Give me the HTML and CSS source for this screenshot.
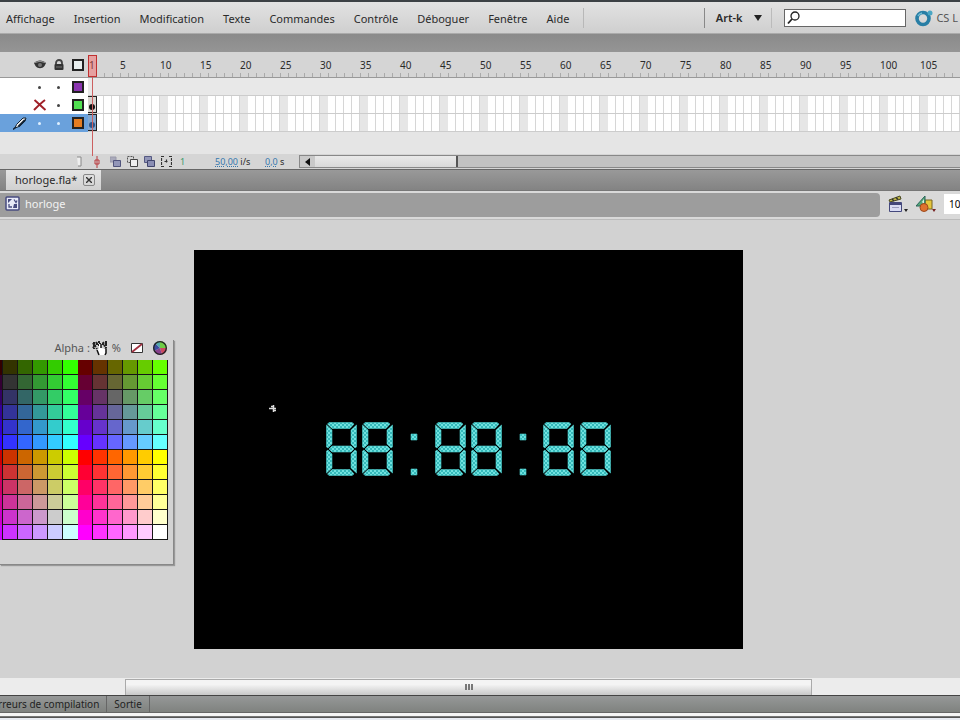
FILE: index.html
```html
<!DOCTYPE html>
<html lang="fr">
<head>
  <meta charset="UTF-8" />
  <meta name="viewport" content="width=device-width, initial-scale=1" />
  <title>horloge.fla</title>
  <link rel="stylesheet" href="styles.css">
</head>
<body>
  <header class="menubar">
    <nav class="menus">
      <button type="button">Affichage</button>
      <button type="button">Insertion</button>
      <button type="button">Modification</button>
      <button type="button">Texte</button>
      <button type="button">Commandes</button>
      <button type="button">Contrôle</button>
      <button type="button">Déboguer</button>
      <button type="button">Fenêtre</button>
      <button type="button">Aide</button>
    </nav>
    <div class="outils">
      <button type="button" class="espace">Art-k
        <svg width="8" height="6" viewBox="0 0 8 6"><path d="M0 0h8L4 6z" fill="#222"/></svg>
      </button>
      <label class="recherche">
        <svg width="14" height="14" viewBox="0 0 14 14" fill="none" stroke="#222"><circle cx="8" cy="5" r="4" stroke-width="1.3"/><path d="M5 8L1 12.500" stroke-width="1.8"/></svg>
        <input type="text" aria-label="Rechercher" />
      </label>
      <a href="#" class="cslive">
        <svg width="20" height="18" viewBox="0 0 20 18"><circle cx="9" cy="9.500" r="6" fill="none" stroke="#287ea5" stroke-width="3.600"/><path d="M4 7a6 6 0 0 1 4-3" fill="none" stroke="#70bcd4" stroke-width="1.500"/><circle cx="16" cy="4" r="2.500" fill="#4aa6c4"/></svg>
        CS L
      </a>
    </div>
  </header>
  <div class="bande"></div>

  <section class="timeline">
    <div class="ligne regle">
      <div class="calque">
        <span></span>
        <svg width="12" height="10" viewBox="0 0 12 10"><path d="M0 3C3-.5 9-.5 12 3L10.500 6C8 9 4 9 1.500 6z" fill="#333"/><circle cx="6" cy="5" r="2" fill="#777"/><path d="M1 2.500q5-2.500 10 0" fill="none" stroke="#999"/></svg>
        <svg width="10" height="11" viewBox="0 0 10 11"><path d="M2 6V4a3 3 0 0 1 6 0v2" fill="none" stroke="#444" stroke-width="1.800"/><rect x="0.500" y="5" width="9" height="6" rx="1" fill="#333"/><path d="M2 8h6" stroke="#777"/></svg>
        <i class="carre vide"></i>
      </div>
      <div class="numeros" id="numeros"></div>
    </div>
    <div class="ligne">
      <div class="calque">
        <span></span><b class="point"></b><b class="point"></b><i class="carre violet"></i>
      </div>
      <div class="images neutre"></div>
    </div>
    <div class="ligne">
      <div class="calque">
        <span></span>
        <svg width="14" height="12" viewBox="0 0 14 12"><path d="M1.500 1C5 4 9 8 12.500 11M12 1C8 4 5 7 1 11" fill="none" stroke="#a02028" stroke-width="2"/></svg>
        <b class="point"></b><i class="carre vert"></i>
      </div>
      <div class="images"><span class="cle"></span></div>
    </div>
    <div class="ligne active">
      <div class="calque">
        <svg width="14" height="14" viewBox="0 0 14 14"><path d="M2 12L3.500 8.500 10 2l3 0-1 3-6 5.500z" fill="#eee" stroke="#123" stroke-width="1"/><path d="M5.500 10.500L12 4" stroke="#123" stroke-width="2"/><path d="M0 13.500L3 11" stroke="#123" stroke-width="1.500"/></svg>
        <b class="point"></b><b class="point"></b><i class="carre orange"></i>
      </div>
      <div class="images"><span class="cle"></span></div>
    </div>
    <div class="reste"></div>
    <div class="pied">
      <svg class="corbeille" width="6" height="11" viewBox="0 0 6 11"><path d="M0 1h4v9H1" fill="#eee" stroke="#888"/></svg>
      <div class="icones">
        <svg width="6" height="12" viewBox="0 0 6 12"><path d="M3 0v12M1 4h4v4H1z" fill="none" stroke="#b8383c"/></svg>
        <svg width="11" height="11" viewBox="0 0 11 11"><path d="M0 1h6v5H0z" fill="#aab" stroke="#99a"/><path d="M3.500 4.500h7v6h-7z" fill="#9296b8" stroke="#50547c"/></svg>
        <svg width="11" height="11" viewBox="0 0 11 11"><path d="M.5.500h6v6h-6z" fill="none" stroke="#555" stroke-dasharray="2 1"/><path d="M3.500 3.500h7v7h-7z" fill="#eee" stroke="#444"/></svg>
        <svg width="11" height="11" viewBox="0 0 11 11"><path d="M.5.500h7v6h-7z" fill="#9296b8" stroke="#555982"/><path d="M3.500 4.500h7v6h-7z" fill="#8a8eb4" stroke="#40446c"/></svg>
        <svg width="11" height="11" viewBox="0 0 11 11"><path d="M3 .5H.5v10H3M8 .5h2.500v10H8M5.500 3.500v4M3.500 5.500h4" fill="none" stroke="#333" stroke-width="1.200" stroke-dasharray="3 1"/></svg>
      </div>
      <span class="courante">1</span>
      <span class="cadence"><a href="#">50,00</a> i/s</span>
      <span class="duree"><a href="#">0,0</a> s</span>
      <div class="defil">
        <button type="button" aria-label="Défiler à gauche"><svg width="5" height="8" viewBox="0 0 5 8"><path d="M5 0v8L0 4z" fill="#111"/></svg></button>
        <div class="curseur"></div>
      </div>
    </div>
    <div class="tete"></div>
  </section>

  <div class="onglets">
    <div class="onglet">
      <span>horloge.fla*</span>
      <button type="button" aria-label="Fermer"><svg width="6" height="6" viewBox="0 0 6 6"><path d="M0 0l6 6M6 0L0 6" stroke="#333" stroke-width="1.400"/></svg></button>
    </div>
  </div>

  <div class="edition">
    <div class="chemin">
      <svg width="15" height="15" viewBox="0 0 15 15"><rect x="1" y="1" width="13" height="13" rx="1" fill="#e8eaf8" stroke="#484c80" stroke-width="1.500"/><path d="M3 3h4L3 7zM9 8h3v4H8z" fill="#484c80"/><path d="M4 8v3h3M9 3.500l2 3 1-2" fill="none" stroke="#484c80" stroke-width="1.300"/></svg>
      <span>horloge</span>
    </div>
    <div class="actions">
      <button type="button" aria-label="Modifier la séquence">
        <svg width="20" height="18" viewBox="0 0 20 18"><path d="M1 5L12 1l1 3L2 7z" fill="#bdb646" stroke="#494820"/><path d="M4 4l2 2M8 2.500l2 2" stroke="#333" stroke-width="1.500"/><path d="M1.500 7.500h12v9h-12z" fill="#d9dcf4" stroke="#44487c"/><path d="M2 9h11" stroke="#44487c" stroke-width="2"/><path d="M4 12.500h7" stroke="#9a9dc0"/><path d="M16 14h4l-2 3z" fill="#222"/></svg>
      </button>
      <button type="button" aria-label="Modifier les symboles">
        <svg width="20" height="18" viewBox="0 0 20 18"><path d="M9 5h7v9H9z" fill="#e5c63c" stroke="#786420"/><path d="M0 11L9 1v10z" fill="#55a87a" stroke="#2a6459"/><path d="M6 7l2-3v5z" fill="#d8efe0"/><circle cx="8" cy="12.500" r="4" fill="#df722e" stroke="#9c481c"/><path d="M16 14h4l-2 3z" fill="#722"/></svg>
      </button>
      <input type="text" value="10" aria-label="Zoom" />
    </div>
  </div>

  <main class="travail">
    <div class="scene">
      <svg class="horloge" viewBox="0 0 549 399" role="img" aria-label="88:88:88">
        <defs>
          <pattern id="grain" width="4" height="4" patternUnits="userSpaceOnUse">
            <rect width="4" height="4" fill="#35b9bb"/>
            <path d="M0 0h2v2H0zM2 2h2v2H2z" fill="#70e2df"/>
          </pattern>
          <symbol id="huit" viewBox="0 0 31 54" overflow="visible">
            <path d="M3 .5h23l2 1.500-4 4.500H6L1.500 2zM.5 3l5.500 5v14l-4 4-1.500-1zM30.500 3L25 8v14l4 4 1.500-1zM6 24h19l3 3-3 3H6l-3-3zM2 28l4 4v14l-5.500 5V29zM29 28l-4 4v14l5.500 5V29zM6 47.500h18l4 4.500-2 1.500H3L1.500 52z"/>
          </symbol>
        </defs>
        <g fill="url(#grain)" stroke="#4ccfcd" stroke-width="0.600">
          <use href="#huit" x="132" y="172" width="31" height="54"/>
          <use href="#huit" x="168" y="172" width="31" height="54"/>
          <use href="#huit" x="241" y="172" width="31" height="54"/>
          <use href="#huit" x="277" y="172" width="31" height="54"/>
          <use href="#huit" x="349" y="172" width="31" height="54"/>
          <use href="#huit" x="386" y="172" width="31" height="54"/>
          <path d="M217 184h6v6h-6zM217 219h6v6h-6zM326 184h6v6h-6zM326 219h6v6h-6z"/>
        </g>
        <path d="M75 158.500h7M79.500 155v7M77 156.500h2M80 160.500h2" stroke="#ddd" stroke-width="1.500"/>
      </svg>
    </div>

    <div class="nuancier">
      <div class="entete">
        <span class="alpha">Alpha :</span>
        <svg width="18" height="18" viewBox="0 0 18 18"><path d="M1 4l4 6M5 3L1 9M2 3v7M7 2v6M11 3l3 7M14 2v7M4 5h11" stroke="#222" stroke-width="2" stroke-dasharray="2 1"/><path d="M7 16l-2-5 2-1V5h2v4l5 1v3l-1 3z" fill="#fff"/><path d="M5 11l2 5M14 10v4l-1 2M9 9V5" fill="none" stroke="#111" stroke-width="1.500"/></svg>
        <span>%</span>
        <button type="button" aria-label="Sans couleur"><svg width="12" height="12" viewBox="0 0 12 12"><path d="M.5 1.500h11v9H.5z" fill="#fff" stroke="#333"/><path d="M1 10L11 2" stroke="#a03040" stroke-width="1.800"/></svg></button>
        <button type="button" aria-label="Couleurs"><svg width="14" height="14" viewBox="0 0 14 14"><path d="M7 7V0a7 7 0 0 1 7 7z" fill="#6fcc44"/><path d="M7 7h7a7 7 0 0 1-5 6.500z" fill="#cc4a60"/><path d="M7 7l2 6.500A7 7 0 0 1 1 10z" fill="#87408c"/><path d="M7 7l-6 3A7 7 0 0 1 2 2z" fill="#3c4ca0"/><path d="M7 7L2 2a7 7 0 0 1 5-2z" fill="#50a9a9"/><circle cx="7" cy="7" r="6.300" fill="none" stroke="#222" stroke-width="1.300"/></svg></button>
      </div>
      <div class="couleurs" id="couleurs"></div>
    </div>
  </main>

  <div class="defil-scene">
    <div class="poignee"><i></i><i></i><i></i></div>
  </div>
  <footer class="panneaux">
    <button type="button">rreurs de compilation</button>
    <button type="button">Sortie</button>
  </footer>
  <div class="bord"></div>

  <script src="script.js"></script>
</body>
</html>
```
FILE: styles.css
```css
* {
  box-sizing: border-box;
}
body {
  margin: 0;
  min-height: 100vh;
  display: flex;
  flex-direction: column;
  overflow: hidden;
  background: #e8ebf2;
  color: #2a2a2a;
  font-family: "Noto Sans", "Open Sans", sans-serif;
  font-size: 11px;
  line-height: 14px;
}
button {
  padding: 0;
  border: 0;
  background: none;
  color: inherit;
  font: inherit;
  white-space: nowrap;
}
input {
  border: 0;
  outline: 0;
  padding: 0;
  font: inherit;
}
a {
  color: inherit;
  text-decoration: none;
}
svg {
  display: block;
  flex: none;
}

/* barre de menus */
.menubar {
  display: flex;
  justify-content: space-between;
  align-items: center;
  height: 34px;
  border-top: 2px solid #3c4145;
  border-bottom: 1px solid #aaa;
  background: linear-gradient(#e2e2e2, #cfcfcf);
}
.menus {
  display: flex;
  gap: 19px;
  padding: 4px 14px 2px 6px;
  border-right: 1px solid #b8b8b8;
}
.outils {
  display: flex;
  align-items: center;
  flex: none;
  padding-right: 2px;
}
.espace {
  display: flex;
  align-items: center;
  gap: 12px;
  height: 20px;
  padding: 0 9px 0 11px;
  border-left: 1px solid #888;
  border-right: 1px solid #bbb;
  font-weight: 600;
}
.recherche {
  display: flex;
  align-items: center;
  width: 122px;
  height: 18px;
  margin: 0 8px 0 12px;
  padding: 0 2px;
  border: 1px solid #666;
  background: #fff;
}
.recherche input {
  flex: 1;
  min-width: 0;
}
.cslive {
  display: flex;
  align-items: center;
  gap: 2px;
  color: #555;
}
.bande {
  height: 18px;
  background: linear-gradient(#8a8a8a, #959595);
}

/* scénario */
.timeline {
  position: relative;
  background: #e5e5e5;
}
.ligne {
  display: flex;
  height: 18px;
}
.calque {
  flex: none;
  display: grid;
  grid-template-columns: 20px 19px 19px 20px;
  place-items: center;
  width: 88px;
  padding-left: 10px;
  background: #fff;
}
.regle {
  height: 26px;
  border-bottom: 1px solid #999;
  background: #d5d5d5;
}
.regle .calque {
  background: none;
}
.numeros {
  flex: 1;
  display: flex;
  overflow: hidden;
  padding-top: 6px;
  background: repeating-linear-gradient(90deg, #aaa 0 1px, transparent 1px 8px) bottom / 100% 4px no-repeat;
}
.numeros span {
  flex: none;
  width: 40px;
  font-size: 10px;
}
.numeros span:first-child {
  width: 32px;
  padding-left: 1px;
}
.images {
  flex: 1;
  border-bottom: 1px solid #ccc;
  background: repeating-linear-gradient(90deg,
    #fff 0 7px, #d6d6d6 7px 8px, #fff 8px 15px, #d6d6d6 15px 16px,
    #fff 16px 23px, #d6d6d6 23px 24px, #fff 24px 31px, #d6d6d6 31px 32px, #e6e6e6 32px 40px);
}
.images.neutre {
  background: #e8e8e8;
}
.cle {
  display: flex;
  justify-content: center;
  align-items: flex-end;
  width: 9px;
  height: 17px;
  padding-bottom: 2px;
  border: 1px solid #222;
  border-left: 0;
  background: #d8d4d0;
}
.cle::after {
  content: "";
  width: 6px;
  height: 6px;
  border-radius: 50%;
  background: #111;
}
.active .calque {
  background: #6aa1dc;
}
.active .cle {
  background: #83a7cf;
}
.active .cle::after {
  background: #2a558c;
}
.carre {
  width: 12px;
  height: 12px;
  border: 2px solid #222;
}
.vide {
  background: #e8eeee;
}
.violet {
  background: #8b35b0;
}
.vert {
  background: #52e052;
}
.orange {
  background: #e47d22;
}
.point {
  width: 3px;
  height: 3px;
  border-radius: 50%;
  background: #444;
}
.active .point {
  background: #dff0ff;
}
.reste {
  height: 22px;
}
.pied {
  display: flex;
  align-items: center;
  height: 15px;
  background: #d5d5d5;
  font-size: 9px;
  white-space: nowrap;
}
.corbeille {
  margin-left: 77px;
}
.icones {
  display: flex;
  gap: 6px;
  margin-left: 11px;
}
.icones svg:first-child {
  margin-right: 4px;
}
.courante {
  width: 35px;
  margin-left: 8px;
  color: #3a9a6a;
}
.cadence {
  width: 50px;
}
.duree {
  width: 34px;
}
.pied a {
  color: #3678ae;
  text-decoration: underline dotted;
}
.defil {
  flex: 1;
  display: flex;
  height: 13px;
  border: 1px solid #888;
  border-right: 0;
  background: #c2c2c2;
}
.defil button {
  display: flex;
  align-items: center;
  justify-content: center;
  width: 15px;
  background: #c9c9c9;
}
.curseur {
  width: 143px;
  border-right: 2px solid #555;
  background: linear-gradient(#e9e9e9, #d9d9d9);
}
/* tête de lecture */
.tete {
  position: absolute;
  top: 3px;
  left: 88px;
  width: 9px;
  height: 22px;
  border: 1px solid #c03030;
  background: rgba(255, 80, 80, 0.4);
}
.tete::after {
  content: "";
  position: absolute;
  top: 21px;
  left: 3px;
  width: 1px;
  height: 79px;
  background: #cc6060;
}

/* onglet du document */
.onglets {
  display: flex;
  align-items: flex-end;
  height: 22px;
  padding-left: 6px;
  border-top: 1px solid #666;
  border-bottom: 1px solid #777;
  background: linear-gradient(#999, #838383);
}
.onglet {
  display: flex;
  align-items: center;
  gap: 6px;
  height: 20px;
  padding: 0 6px 0 9px;
  background: linear-gradient(#e4e4e4, #d0d0d0);
}
.onglet button {
  display: grid;
  place-items: center;
  width: 12px;
  height: 12px;
  border: 1px solid #888;
  border-radius: 2px;
}
.edition {
  display: flex;
  height: 29px;
  padding: 2px 0;
  border-bottom: 1px solid #bbb;
  background: #d9d9d9;
}
.chemin {
  flex: 1;
  display: flex;
  align-items: center;
  gap: 5px;
  padding: 0 0 3px 5px;
  border-radius: 0 4px 4px 0;
  background: #9d9d9d;
  color: #f2f2f2;
}
.actions {
  display: flex;
  align-items: center;
  gap: 8px;
  padding: 0 0 3px 8px;
}
.actions input {
  width: 16px;
  height: 20px;
  padding-left: 5px;
  background: #fff;
  font-size: 10px;
}

/* zone de travail */
.travail {
  position: relative;
  flex: 1;
  display: flex;
  justify-content: center;
  align-items: center;
  padding: 30px 23px 29px 0;
  background: #d2d2d2;
}
.scene {
  width: 549px;
  background: #000;
}
.horloge {
  width: 100%;
}
.nuancier {
  position: absolute;
  top: 120px;
  left: 0;
  width: 174px;
  padding-bottom: 24px;
  border-right: 1px solid #888;
  border-bottom: 1px solid #888;
  background: #d3d3d3;
  box-shadow: 1px 1px 1px #999;
}
.entete {
  display: flex;
  align-items: center;
  justify-content: flex-end;
  gap: 10px;
  height: 20px;
  padding: 0 6px 4px 0;
  color: #555;
}
.entete .alpha {
  margin-right: -8px;
}
.entete svg + span {
  margin-left: -8px;
}
.couleurs {
  display: grid;
  grid-template-columns: repeat(12, 15px);
  grid-auto-rows: 15px;
  justify-content: end;
  width: 168px;
  overflow: hidden;
}
.couleurs button {
  border-right: 1px solid #151515;
  border-bottom: 1px solid #151515;
}
.couleurs button:nth-child(6n + 1) {
  border-bottom: 0;
}
.couleurs button:nth-child(12n + 6) {
  border-right: 0;
}

/* bas de fenêtre */
.defil-scene {
  height: 17px;
  padding: 1px 148px 0 125px;
  background: #ececec;
}
.poignee {
  display: flex;
  justify-content: center;
  padding-top: 4px;
  gap: 1px;
  height: 16px;
  border: 1px solid #aaa;
  border-bottom: 0;
  background: linear-gradient(#f4f4f4 30%, #c8c8c8);
}
.poignee i {
  width: 2px;
  height: 6px;
  background: #777;
}
.panneaux {
  display: flex;
  height: 18px;
  border-top: 1px solid #444;
  border-bottom: 1px solid #666;
  background: linear-gradient(#969898, #7f827f);
}
.panneaux button {
  padding: 0 7px;
  border-right: 1px solid #666;
  color: #222;
  font-size: 10px;
}
.panneaux button:first-child {
  margin-left: -2px;
  padding-left: 0;
}
.bord {
  height: 5px;
  border-top: 3px solid #f5f5f5;
  border-bottom: 1px solid #555;
  background: #777;
  margin-bottom: 2px;
}
```
FILE: script.js
```js
// numéros d'images : 1, puis de 5 en 5
const numeros = document.getElementById('numeros');
for (let n = 0; n <= 105; n += 5) {
  const span = document.createElement('span');
  span.textContent = n || 1;
  numeros.appendChild(span);
}

// nuancier web : vert en colonnes, bleu en lignes, rouge par bloc
const couleurs = document.getElementById('couleurs');
const rouges = [[51, 102], [204, 255]];
for (let ligne = 0; ligne < 12; ligne++) {
  for (let col = 0; col < 12; col++) {
    const r = rouges[Math.floor(ligne / 6)][Math.floor(col / 6)];
    const v = (col % 6) * 51;
    const b = (ligne % 6) * 51;
    const bouton = document.createElement('button');
    bouton.type = 'button';
    bouton.style.backgroundColor = `rgb(${r}, ${v}, ${b})`;
    bouton.setAttribute('aria-label', `rgb ${r} ${v} ${b}`);
    couleurs.appendChild(bouton);
  }
}
```
